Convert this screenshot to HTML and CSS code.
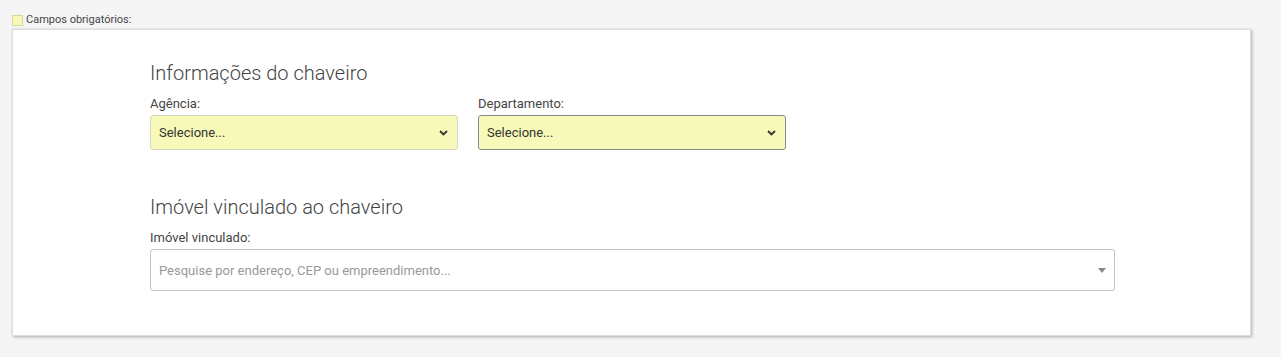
FILE: index.html
```html
<!DOCTYPE html>
<html lang="pt-BR">
<head>
    <meta charset="UTF-8">
    <meta name="viewport" content="width=device-width, initial-scale=1.0">
    <title>Cadastro de chaveiro</title>
    <link rel="stylesheet" href="styles.css">
</head>
<body>
    <!-- Legenda -->
    <div class="legend">
        <span class="legend-box"></span>
        <span>Campos obrigatórios:</span>
    </div>

    <div class="card">
        <!-- Informações do chaveiro -->
        <section class="section">
            <h3>Informações do chaveiro</h3>
            <div class="row">
                <div class="form-group">
                    <label>Agência:</label>
                    <div class="select-wrap required">
                        <span>Selecione...</span>
                        <svg class="chevron" width="9" height="6" viewBox="0 0 9 6"><path d="M1 1 L4.5 4.5 L8 1" fill="none" stroke="#333" stroke-width="1.8"/></svg>
                    </div>
                </div>
                <div class="form-group">
                    <label>Departamento:</label>
                    <div class="select-wrap required focused">
                        <span>Selecione...</span>
                        <svg class="chevron" width="9" height="6" viewBox="0 0 9 6"><path d="M1 1 L4.5 4.5 L8 1" fill="none" stroke="#333" stroke-width="1.8"/></svg>
                    </div>
                </div>
            </div>
        </section>

        <!-- Imóvel vinculado -->
        <section class="section second">
            <h3>Imóvel vinculado ao chaveiro</h3>
            <div class="form-group">
                <label>Imóvel vinculado:</label>
                <div class="search-select">
                    <span class="placeholder">Pesquise por endereço, CEP ou empreendimento...</span>
                    <svg width="8" height="5" viewBox="0 0 8 5"><path d="M0 0 L8 0 L4 5 Z" fill="#888"/></svg>
                </div>
            </div>
        </section>
    </div>
</body>
</html>
```

FILE: styles.css
```css
* {
    box-sizing: border-box;
    margin: 0;
    padding: 0;
}

body {
    font-family: Roboto, 'Liberation Sans', sans-serif;
    background-color: #f5f5f5;
    color: #333;
    padding: 13px 0 0 12px;
    width: 1281px;
    height: 357px;
}

/* Legenda */
.legend {
    display: flex;
    align-items: center;
    gap: 3px;
    font-size: 11px;
    line-height: 14px;
    color: #444;
    height: 14px;
}

.legend-box {
    width: 11px;
    height: 11px;
    background-color: #f7f9b8;
    border: 1px solid #d6d8a0;
}

/* Card */
.card {
    margin-top: 2px;
    width: 1239px;
    height: 307px;
    background-color: #fff;
    border: 1px solid #ddd;
    box-shadow: 1px 1px 3px rgba(0,0,0,0.3);
    padding: 31px 0 0 137px;
}

.section h3 {
    font-size: 20px;
    font-weight: 300;
    line-height: 24px;
    color: #444;
    margin-bottom: 11px;
}

.section.second {
    margin-top: 45px;
}

.row {
    display: flex;
    gap: 20px;
}

.form-group label {
    display: block;
    font-size: 13px;
    line-height: 16px;
    color: #444;
    margin-bottom: 3px;
}

.select-wrap {
    width: 308px;
    height: 35px;
    border: 1px solid #d5d5c0;
    border-radius: 3px;
    display: flex;
    align-items: center;
    justify-content: space-between;
    padding: 0 9px 0 8px;
    font-size: 13px;
    color: #333;
}

.select-wrap.required {
    background-color: #f7f9b8;
}

.select-wrap.focused {
    border-color: #888;
}

.search-select {
    width: 965px;
    height: 42px;
    border: 1px solid #c4c4c4;
    border-radius: 3px;
    display: flex;
    align-items: center;
    justify-content: space-between;
    padding: 0 8px 0 8px;
    font-size: 13px;
}

.placeholder {
    color: #999;
}
```
